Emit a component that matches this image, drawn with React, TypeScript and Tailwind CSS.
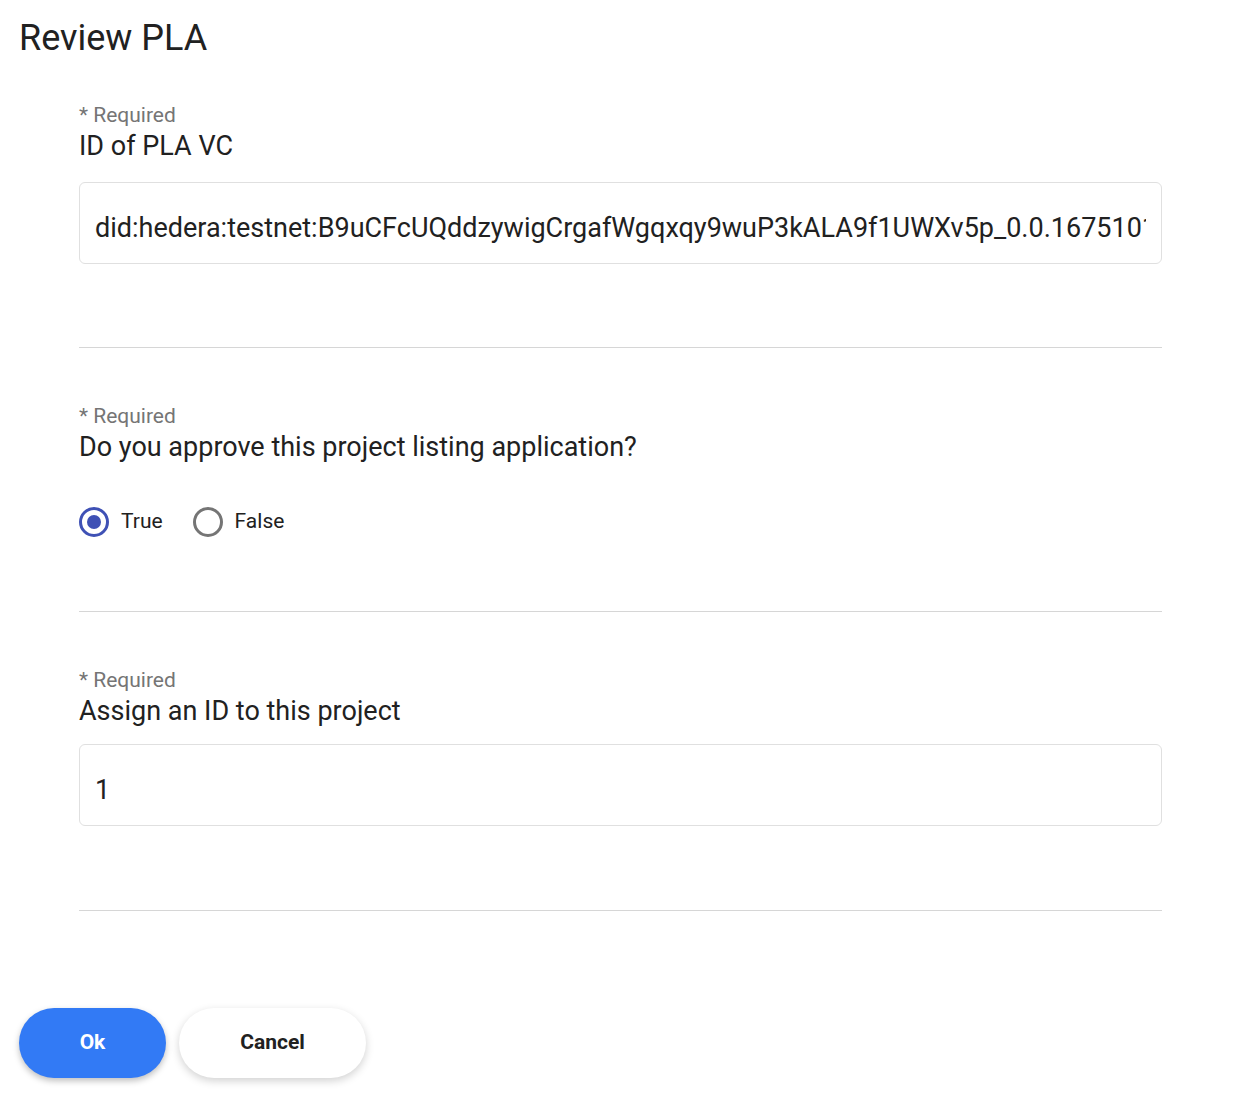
const font = { fontFamily: "Roboto, 'Liberation Sans', sans-serif" };

const Required = () => (
  <p className="text-[21px] leading-[26px] text-[#757575]">* Required</p>
);

const Radio = ({ checked, label }: { checked: boolean; label: string }) => (
  <label className="flex items-center gap-3 cursor-pointer">
    <span
      className={
        checked
          ? "w-[30px] h-[30px] rounded-full border-[3px] border-[#3f51b5] flex items-center justify-center"
          : "w-[30px] h-[30px] rounded-full border-[3px] border-[#757575] flex items-center justify-center"
      }
    >
      {checked && <span className="w-[14px] h-[14px] rounded-full bg-[#3f51b5]" />}
    </span>
    <span className="text-[21px] text-[#212121]">{label}</span>
  </label>
);

export default function App() {
  return (
    <div className="w-[1238px] h-[1110px] bg-white text-[#212121]" style={font}>
      <h1 className="pl-[19px] pt-[14px] text-[36px] leading-[48px] font-normal">Review PLA</h1>

      <div className="ml-[79px] w-[1083px]">
        {/* ID of PLA VC */}
        <div className="pt-[40px]">
          <Required />
          <p className="text-[27px] leading-[36px]">ID of PLA VC</p>
          <input
            readOnly
            value="did:hedera:testnet:B9uCFcUQddzywigCrgafWgqxqy9wuP3kALA9f1UWXv5p_0.0.1675101234567"
            className="mt-[18px] w-full h-[82px] border border-[#e0e0e0] rounded-[6px] px-[15px] pt-[10px] text-[27px] text-[#212121] outline-none bg-white"
          />
          <div className="mt-[83px] border-t border-[#d6d6d6]" />
        </div>

        {/* Approve */}
        <div className="pt-[55px]">
          <Required />
          <p className="text-[27px] leading-[36px]">Do you approve this project listing application?</p>
          <div className="mt-[41px] flex items-center gap-[30px]">
            <Radio checked label="True" />
            <Radio checked={false} label="False" />
          </div>
          <div className="mt-[73px] border-t border-[#d6d6d6]" />
        </div>

        {/* Assign ID */}
        <div className="pt-[55px]">
          <Required />
          <p className="text-[27px] leading-[36px]">Assign an ID to this project</p>
          <input
            readOnly
            value="1"
            className="mt-[15px] w-full h-[82px] border border-[#e0e0e0] rounded-[6px] px-[15px] pt-[10px] text-[27px] text-[#212121] outline-none bg-white"
          />
          <div className="mt-[84px] border-t border-[#d6d6d6]" />
        </div>
      </div>

      <div className="flex gap-[13px] pl-[19px] mt-[97px]">
        <button className="w-[147px] h-[70px] rounded-full bg-[#327af5] text-white text-[21px] font-bold shadow-[0_3px_6px_rgba(0,0,0,0.25)]">
          Ok
        </button>
        <button className="w-[187px] h-[70px] rounded-full bg-white text-[#212121] text-[21px] font-bold shadow-[0_3px_8px_rgba(0,0,0,0.18)]">
          Cancel
        </button>
      </div>
    </div>
  );
}
